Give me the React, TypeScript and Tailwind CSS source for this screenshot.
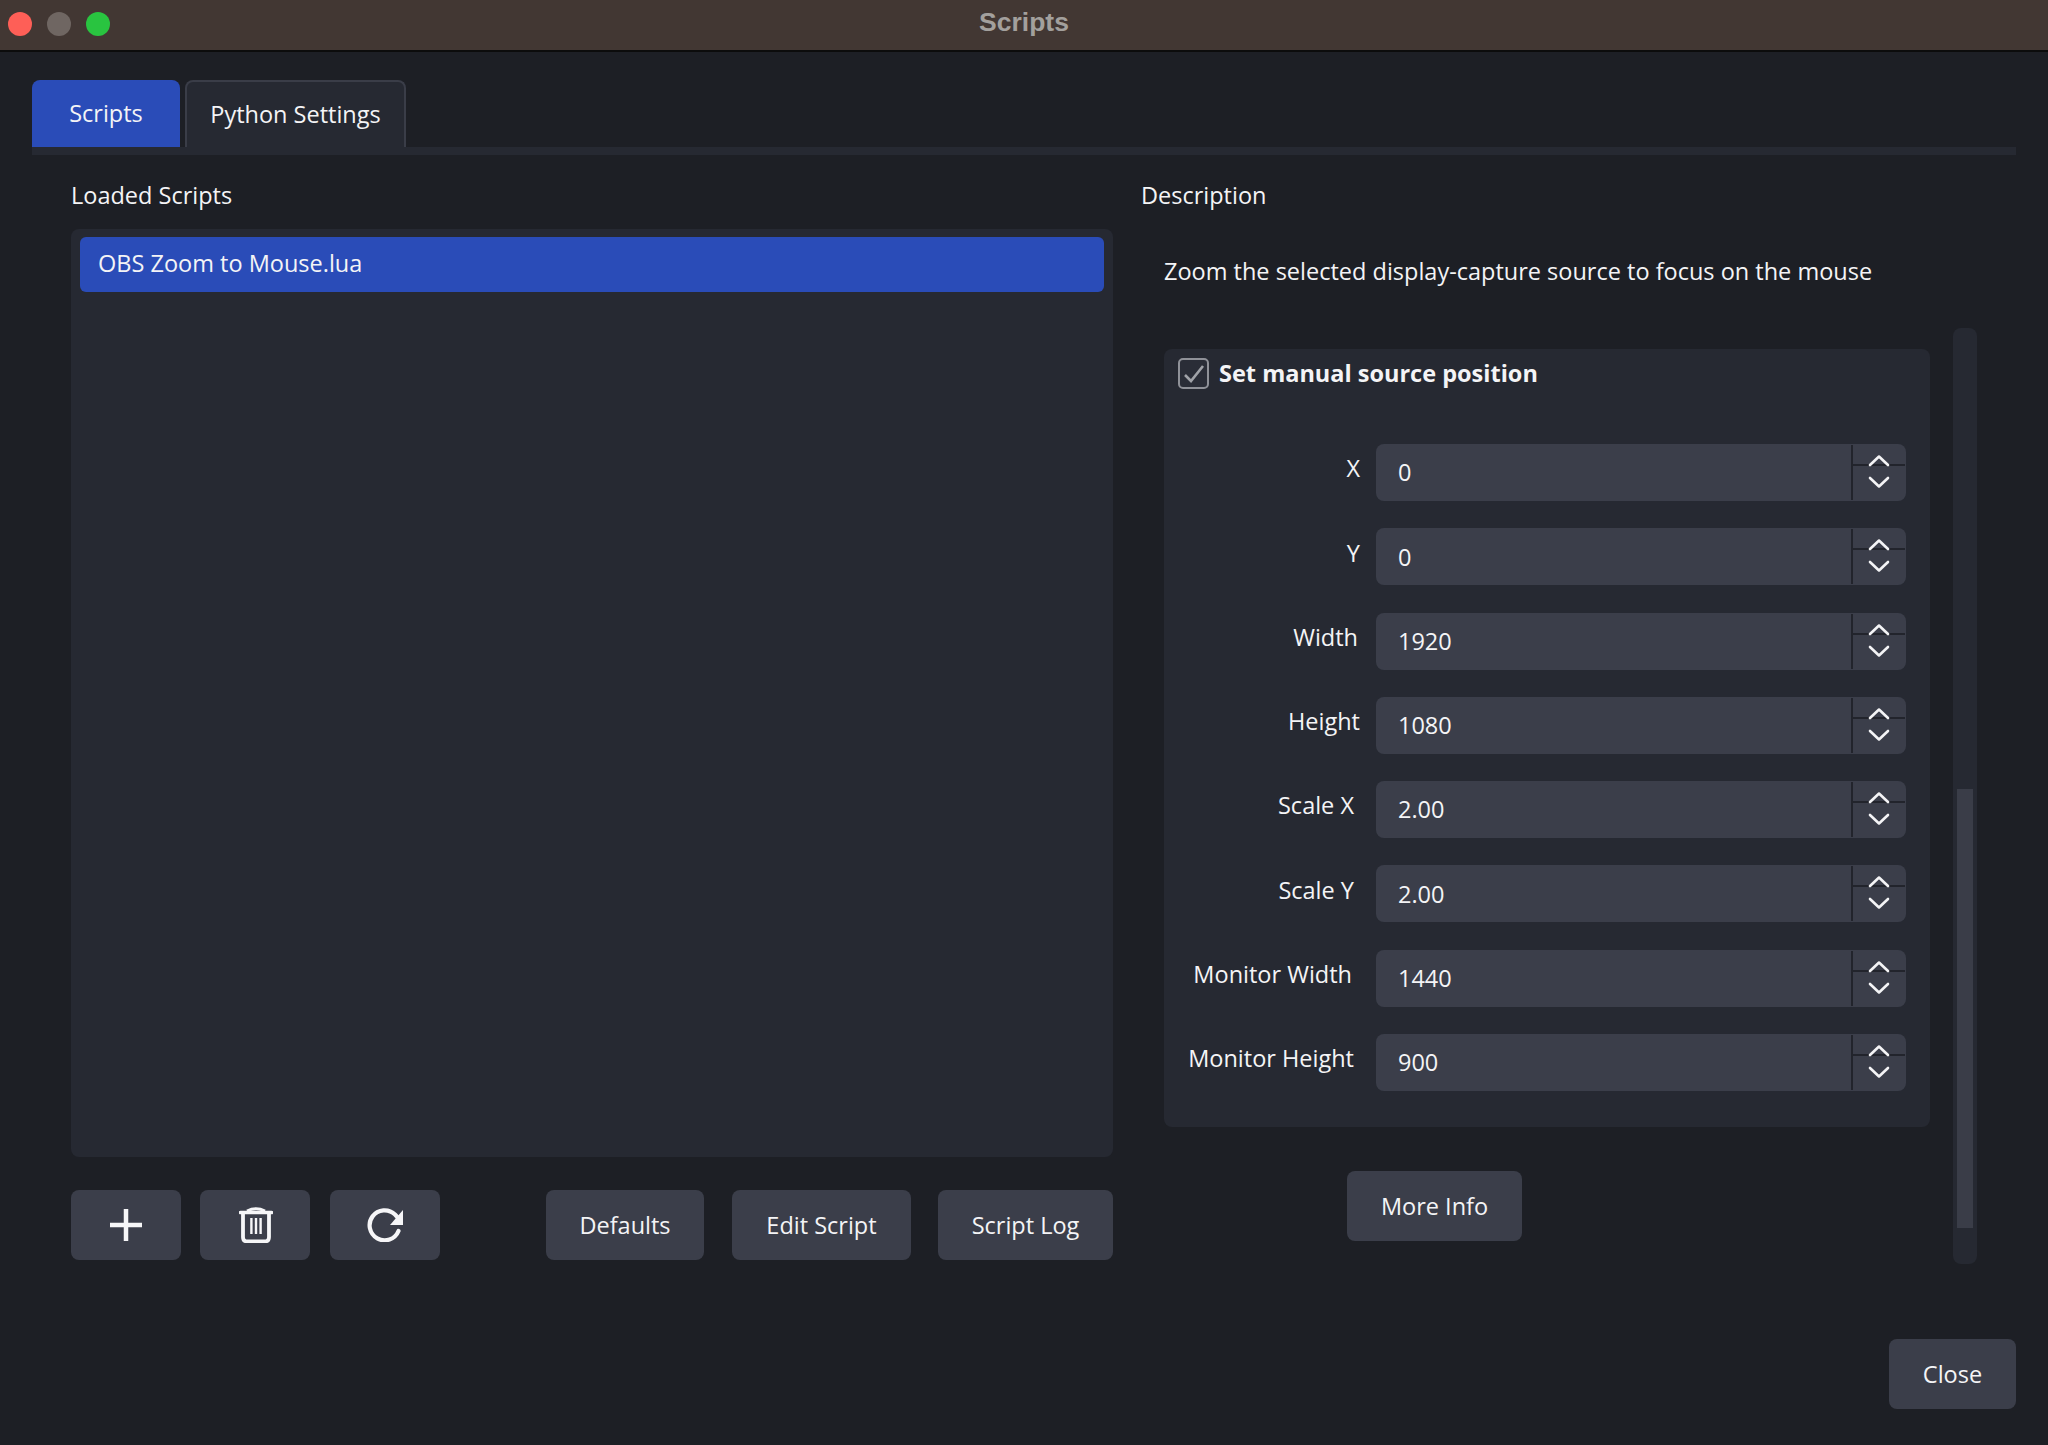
const FONT = "font-['Open_Sans','Noto_Sans',sans-serif]";

const fields = [
  { label: "X", value: "0", pad: "pr-[16px]" },
  { label: "Y", value: "0", pad: "pr-[16px]" },
  { label: "Width", value: "1920", pad: "pr-[18px]" },
  { label: "Height", value: "1080", pad: "pr-[16px]" },
  { label: "Scale X", value: "2.00", pad: "pr-[22px]" },
  { label: "Scale Y", value: "2.00", pad: "pr-[22px]" },
  { label: "Monitor Width", value: "1440", pad: "pr-[24px]" },
  { label: "Monitor Height", value: "900", pad: "pr-[22px]" },
];

function Chevron({ up }: { up?: boolean }) {
  return (
    <svg width="22" height="13" viewBox="0 0 22 13" fill="none" stroke="#f4f4f6" strokeWidth="2.6" strokeLinecap="round" strokeLinejoin="round">
      <path d={up ? "M2 11 L11 2.5 L20 11" : "M2 2 L11 10.5 L20 2"} />
    </svg>
  );
}

function SpinRow({ label, value, pad }: { label: string; value: string; pad: string }) {
  return (
    <div className="flex items-center h-[57px]">
      <div className={`w-[212px] shrink-0 text-right text-[23.5px] leading-none pb-[7px] ${pad}`}>{label}</div>
      <div className="flex-1 h-full flex rounded-[8px] bg-[#3b3e4a]">
        <div className="flex-1 pl-[22px] pt-[1px] text-[23.5px] leading-none flex items-center">{value}</div>
        <div className="w-[54px] my-[1px] mr-[1px] border-l-2 border-[#22242c] flex flex-col">
          <div className="h-[21px] border-b-2 border-[#22242c] flex items-end justify-center">
            <div className="h-[13px] -mb-[3px] flex"><Chevron up /></div>
          </div>
          <div className="flex-1 flex justify-center pt-[10px]"><Chevron /></div>
        </div>
      </div>
    </div>
  );
}

function Button({ children, className = "" }: { children: React.ReactNode; className?: string }) {
  return (
    <div className={`h-[70px] rounded-[8px] bg-[#3b3e4a] flex items-center justify-center text-[23.5px] text-[#f4f4f6] ${className}`}>
      {children}
    </div>
  );
}

export default function App() {
  return (
    <div className={`w-[2048px] h-[1445px] bg-[#1d1f25] text-[#f4f4f6] flex flex-col overflow-hidden ${FONT}`}>
      <div className="h-[52px] shrink-0 bg-[#423733] border-b-2 border-[#0c0c0c] relative flex items-center justify-center">
        <div className="absolute left-[8px] top-[12px] flex gap-[15px]">
          <div className="w-[24px] h-[24px] rounded-full bg-[#fe5f57]" />
          <div className="w-[24px] h-[24px] rounded-full bg-[#6f6662]" />
          <div className="w-[24px] h-[24px] rounded-full bg-[#29c440]" />
        </div>
        <div className="font-['Liberation_Sans',sans-serif] font-bold text-[26.5px] leading-none text-[#a3a09d] -mt-[6px]">Scripts</div>
      </div>

      <div className="flex-1 flex flex-col px-[32px] pt-[28px]">
        <div className="flex gap-[5px] h-[67px] items-stretch">
          <div className="w-[148px] bg-[#2a4cb8] rounded-t-[8px] pt-[1px] flex items-center justify-center text-[23.5px]">Scripts</div>
          <div className="w-[221px] bg-[#262932] rounded-t-[8px] pt-[1px] border-t-2 border-x-2 border-[#3a3d48] flex items-center justify-center text-[23.5px]">Python Settings</div>
        </div>
        <div className="h-[8px] bg-[#262932]" />

        <div className="flex pl-[39px] pr-[1px]">
          <div className="w-[1042px] shrink-0 flex flex-col">
            <div className="h-[74px] pt-[7px] flex items-center text-[23.5px]">Loaded Scripts</div>
            <div className="h-[928px] bg-[#262932] rounded-[8px] px-[9px] py-[8px]">
              <div className="h-[55px] bg-[#2a4cb8] rounded-[6px] pl-[18px] pb-[1px] flex items-center text-[23.5px]">OBS Zoom to Mouse.lua</div>
            </div>
            <div className="flex mt-[33px]">
              <Button className="w-[110px]">
                <svg width="32" height="32" viewBox="0 0 32 32" fill="none" stroke="#f6f6f8" strokeWidth="4.5">
                  <path d="M16 0 V32 M0 16 H32" />
                </svg>
              </Button>
              <Button className="w-[110px] ml-[19px] pl-[2px]">
                <svg width="34" height="36" viewBox="0 0 34 36" fill="none" stroke="#f6f6f8">
                  <path d="M1.5 5.5 H32.5" strokeWidth="3.6" strokeLinecap="round" />
                  <path d="M8 4 Q17 -0.5 26 4" strokeWidth="3" />
                  <path d="M4 7 V30 Q4 34.5 8.5 34.5 H25.5 Q30 34.5 30 30 V7" strokeWidth="3.8" />
                  <path d="M12.4 11 V27 M17 11 V27 M21.6 11 V27" strokeWidth="2.4" />
                </svg>
              </Button>
              <Button className="w-[110px] ml-[20px]">
                <svg width="36" height="34" viewBox="0 0 36 34" fill="none" stroke="#f6f6f8" strokeWidth="4.2">
                  <path d="M31.5 23 A15 15 0 1 1 28 6.5 L33 12" strokeLinecap="round" />
                  <path d="M36 2 V17 H23 Z" fill="#f6f6f8" stroke="none" />
                </svg>
              </Button>
              <Button className="w-[158px] ml-[106px] pt-[1px]">Defaults</Button>
              <Button className="w-[179px] ml-[28px] pt-[1px]">Edit Script</Button>
              <Button className="w-[175px] ml-[27px] pt-[1px]">Script Log</Button>
            </div>
          </div>

          <div className="flex-1 ml-[28px] flex flex-col">
            <div className="h-[74px] pt-[7px] flex items-center text-[23.5px]">Description</div>
            <div className="h-[32px]" />
            <div className="pl-[23px] pt-[1px] h-[25px] flex items-center text-[23.5px] leading-none whitespace-nowrap -mt-[2px]">Zoom the selected display-capture source to focus on the mouse</div>
            <div className="flex mt-[44px]">
              <div className="w-[789px] pl-[23px] pt-[21px] flex flex-col">
                <div className="bg-[#262932] rounded-[8px] h-[778px] pl-[14px] pr-[24px] pt-[9px] flex flex-col">
                  <div className="flex items-center h-[31px]">
                    <div className="w-[31px] h-[31px] rounded-[5px] border-2 border-[#8f9198] flex items-center justify-center bg-[#2a2d37]">
                      <svg width="22" height="20" viewBox="0 0 22 20" fill="none" stroke="#a0a2a8" strokeWidth="2.6">
                        <path d="M2 11 L8 17 L20 2" />
                      </svg>
                    </div>
                    <div className="ml-[10px] font-bold text-[23.5px] leading-none">Set manual source position</div>
                  </div>
                  <div className="-ml-[14px] mt-[55px] flex flex-col gap-[27.3px]">
                    {fields.map((f) => (
                      <SpinRow key={f.label} label={f.label} value={f.value} pad={f.pad} />
                    ))}
                  </div>
                </div>
                <Button className="w-[175px] ml-[183px] mt-[44px] pt-[1px]">More Info</Button>
              </div>
              <div className="w-[24px] ml-[23px] h-[936px] bg-[#262932] rounded-[8px] flex flex-col items-center justify-end pb-[36px]">
                <div className="w-[16px] h-[439px] bg-[#3a3d48]" />
              </div>
            </div>
          </div>
        </div>

        <div className="flex justify-end mt-[75px]">
          <Button className="w-[127px] pt-[1px]">Close</Button>
        </div>
      </div>
    </div>
  );
}
